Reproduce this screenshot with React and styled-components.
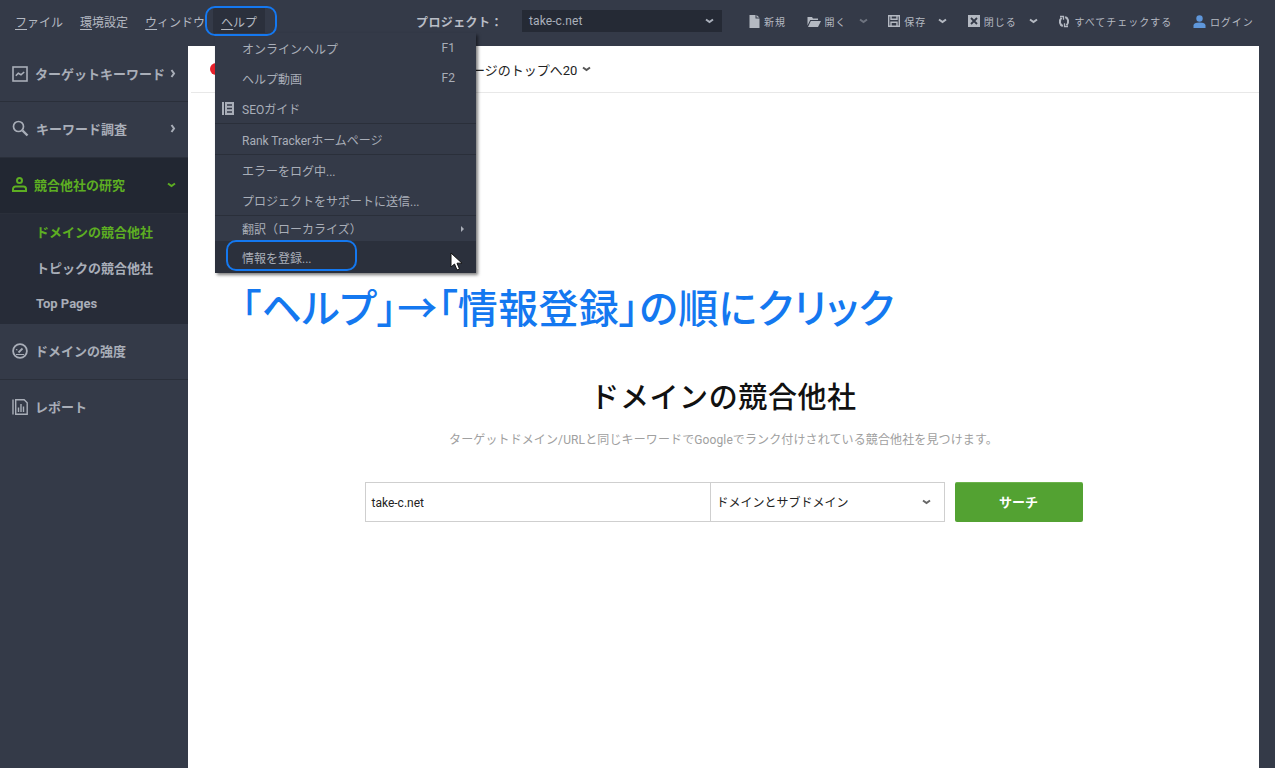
import React from 'react';
import styled, { createGlobalStyle } from 'styled-components';

const FONT = '"Roboto", "Noto Sans CJK JP", sans-serif';

const GlobalStyle = createGlobalStyle`
  html, body { margin: 0; padding: 0; height: 100%; overflow: hidden; background: #343a48; }
  * { box-sizing: border-box; }
  body { font-family: ${FONT}; }
`;

const menus = ['ファイル', '環境設定', 'ウィンドウ'];

const App = () => (
  <Page>
    <GlobalStyle />
    <TopBar>
      <MenuBar>
        {menus.map((m) => <MenuItem key={m}><u>{m[0]}</u>{m.slice(1)}</MenuItem>)}
        <HelpItem><u>ヘ</u>ルプ</HelpItem>
      </MenuBar>
      <ProjectLabel>プロジェクト：</ProjectLabel>
      <ProjectSelect>take-c.net<SmallChevron $color="#aab0bb" /></ProjectSelect>
      <Tools>
        <Tool><FileGlyph />新規</Tool>
        <Tool><FolderGlyph />開く<Caret $dim /></Tool>
        <Tool><SaveGlyph />保存<Caret /></Tool>
        <Tool><CloseGlyph />閉じる<Caret /></Tool>
        <Tool><SyncGlyph />すべてチェックする</Tool>
        <Tool><UserGlyph />ログイン</Tool>
      </Tools>
    </TopBar>

    <Body>
      <Sidebar>
        <NavRow>
          <NavLabel><ChartGlyph />ターゲットキーワード</NavLabel>
          <NavChevronRight />
        </NavRow>
        <NavRow>
          <NavLabel><SearchGlyph />キーワード調査</NavLabel>
          <NavChevronRight />
        </NavRow>
        <NavRow $active>
          <NavLabel><PersonGlyph />競合他社の研究</NavLabel>
          <CaretGlyph />
        </NavRow>
        <SubNav>
          <SubItem $active>ドメインの競合他社</SubItem>
          <SubItem>トピックの競合他社</SubItem>
          <SubItem>Top Pages</SubItem>
        </SubNav>
        <NavRow>
          <NavLabel><GaugeGlyph />ドメインの強度</NavLabel>
        </NavRow>
        <NavRow $last>
          <NavLabel><ReportGlyph />レポート</NavLabel>
        </NavRow>
      </Sidebar>

      <Main>
        <FilterBar>
          <RedDot />
          <FilterText>ページのトップへ20<SmallChevron $color="#555" /></FilterText>
        </FilterBar>
        <Hero>
          <Title>ドメインの競合他社</Title>
          <Description>ターゲットドメイン/URLと同じキーワードでGoogleでランク付けされている競合他社を見つけます。</Description>
          <SearchForm>
            <DomainInput>take-c.net</DomainInput>
            <ScopeSelect><span>ドメインとサブドメイン</span><SmallChevron $color="#666" /></ScopeSelect>
            <SearchButton>サーチ</SearchButton>
          </SearchForm>
        </Hero>
      </Main>
      <RightEdge />
    </Body>

    <HelpMenu>
      <HelpRow>オンラインヘルプ<Key>F1</Key></HelpRow>
      <HelpRow>ヘルプ動画<Key>F2</Key></HelpRow>
      <HelpRow $line><GuideGlyph />SEOガイド</HelpRow>
      <HelpRow $line>Rank Trackerホームページ</HelpRow>
      <HelpRow>エラーをログ中...</HelpRow>
      <HelpRow $line>プロジェクトをサポートに送信...</HelpRow>
      <HelpRow $short>翻訳（ローカライズ）<Arrow /></HelpRow>
      <HelpRow $hover>情報を登録...<Cursor /></HelpRow>
    </HelpMenu>

    <Ring $x={205} $y={6} $w={72} $h={30} />
    <Ring $x={226} $y={240} $w={131} $h={31} />
    <Annotation>「ヘルプ」→「情報登録」の順にクリック</Annotation>
  </Page>
);

const FileGlyph = () => (
  <svg width="11" height="13" viewBox="0 0 11 13"><path d="M0.500 0H6.500V3.500H10.500V13H0.500zM7.500 0l3 2.600h-3z" fill="#b4b9c2" /></svg>
);
const FolderGlyph = () => (
  <svg width="14" height="11" viewBox="0 0 14 11"><path d="M0.500 1H5l1 1.500h5V4H3.200L0.500 9.500zM3.800 5H14l-3 6H1z" fill="#b4b9c2" /></svg>
);
const SaveGlyph = () => (
  <svg width="12" height="12" viewBox="0 0 12 12" fill="none" stroke="#b4b9c2" strokeWidth="1.4"><path d="M0.700 0.700h10.600v10.600H0.700z" /><path d="M3 1v3.200h6V1M3 11V7.200h6V11" /></svg>
);
const CloseGlyph = () => (
  <svg width="12" height="12" viewBox="0 0 12 12"><rect width="12" height="12" fill="#b4b9c2" /><path d="M3 3l6 6M9 3l-6 6" stroke="#343a48" strokeWidth="1.8" /></svg>
);
const SyncGlyph = () => (
  <svg width="12" height="13" viewBox="0 0 12 13" fill="none" stroke="#b4b9c2" strokeWidth="2"><path d="M4.800 11C2 10 0.500 6 3.500 2.600" /><path d="M7.200 2C10 3 11.500 7 8.500 10.400" /><path d="M2 1.500h3.500v3.200M10 11.500H6.500V8.300" strokeWidth="1.300" /></svg>
);
const UserGlyph = () => (
  <svg width="13" height="13" viewBox="0 0 13 13" fill="#5f97db"><circle cx="6.500" cy="3.500" r="3.200" /><path d="M0.500 13V10.500C0.500 8.500 2.500 7.500 6.500 7.500S12.500 8.500 12.500 10.500V13z" /></svg>
);
const ChartGlyph = () => (
  <svg width="16" height="16" viewBox="0 0 16 16" fill="none" stroke="currentColor"><rect x="1" y="1" width="14" height="14" strokeWidth="1.6" /><path d="M3.800 9.800L6.300 7.300 9 8.800 12.200 6" strokeWidth="1.6" /></svg>
);
const SearchGlyph = () => (
  <svg width="17" height="17" viewBox="0 0 17 17" fill="none" stroke="currentColor"><circle cx="6.500" cy="6.500" r="5" strokeWidth="1.700" /><path d="M10.500 10.500L15.500 15.500" strokeWidth="2.400" /></svg>
);
const PersonGlyph = () => (
  <svg width="15" height="15" viewBox="0 0 15 15" fill="none" stroke="currentColor" strokeWidth="2"><circle cx="7.500" cy="3.500" r="2.500" /><path d="M1 14v-2a2.500 2.500 0 0 1 2.500-2.500h8A2.500 2.500 0 0 1 14 12v2z" /></svg>
);
const GaugeGlyph = () => (
  <svg width="16" height="16" viewBox="0 0 16 16" fill="none" stroke="currentColor" strokeWidth="1.800"><circle cx="8" cy="8" r="6.900" /><path d="M6.500 9.500L10.500 5.500" /><path d="M4 6.500l1.500 0.500M4 11.500h8" strokeWidth="1.200" /></svg>
);
const ReportGlyph = () => (
  <svg width="16" height="16" viewBox="0 0 16 16" fill="none" stroke="currentColor" strokeWidth="1.400"><path d="M1 0.500v15M3.700 0.700h8.500l3 3v11.600H3.700z" /><path d="M6.500 13V8.500M9 13V5M11.500 13V7.500" /></svg>
);
const Guide = ({ className }) => (
  <svg className={className} width="12" height="13" viewBox="0 0 12 13" fill="#a9aeb8"><rect x="0" y="0" width="2" height="13" /><path d="M3 0h9v13H3z" /><path d="M5 3h5M5 6.500h5M5 10h5" stroke="#343a48" strokeWidth="1.300" /></svg>
);
const CursorGlyph = ({ className }) => (
  <svg className={className} width="13" height="19" viewBox="0 0 13 19"><path d="M1 1v14l3.500-3 2.500 6 2.500-1-2.500-5.800H12z" fill="#fff" stroke="#111" strokeWidth="1" /></svg>
);
const CaretGlyph = ({ className }) => (
  <svg className={className} width="9" height="6" viewBox="0 0 9 6" fill="none" stroke="currentColor" strokeWidth="2"><path d="M1 1.500l3.500 2.500L8 1.500" /></svg>
);
const ChevronGlyph = ({ className }) => (
  <svg className={className} width="6" height="9" viewBox="0 0 6 9" fill="none" stroke="currentColor" strokeWidth="2"><path d="M1.500 1l2.500 3.500L1.500 8" /></svg>
);

const Page = styled.div`
  position: relative;
  width: 1275px;
  height: 768px;
  overflow: hidden;
  background: #343a48;
  font-family: ${FONT};
`;

const TopBar = styled.header`
  height: 46px;
  display: flex;
  align-items: center;
  padding: 0 0 4px 15px;
  color: #b4b9c2;
`;

const MenuBar = styled.nav`
  display: flex;
  align-items: center;
  width: 401px;
  gap: 17px;
`;

const MenuItem = styled.span`
  font-size: 12px;
  color: #b4b9c2;

  u {
    text-underline-offset: 2px;
  }
`;

const HelpItem = styled(MenuItem)`
  background: #2b303c;
  margin: 0 0 0 -9px;
  padding: 6px 8px;
`;

const ProjectLabel = styled.span`
  font-size: 12px;
  font-weight: 700;
  letter-spacing: 0.4px;
  width: 106px;
  color: #b9bdc6;
`;

const SmallChevron = styled(CaretGlyph)`
  color: ${({ $color }) => $color};
  flex: none;
`;

const ProjectSelect = styled.div`
  width: 200px;
  height: 22px;
  display: flex;
  align-items: center;
  justify-content: space-between;
  padding: 0 8px 0 7px;
  background: #252a35;
  font-size: 12px;
  letter-spacing: 0.1px;
  color: #aab0bb;
`;

const Tools = styled.div`
  display: flex;
  align-items: center;
  gap: 20.6px;
  margin-left: 27px;
`;

const Tool = styled.span`
  display: flex;
  align-items: center;
  gap: 4px;
  font-size: 10px;
  letter-spacing: 1px;
  color: #b4b9c2;
  white-space: nowrap;
`;

const Caret = styled(CaretGlyph)`
  margin-left: 8px;
  opacity: ${({ $dim }) => ($dim ? 0.45 : 1)};
`;

const Body = styled.div`
  display: flex;
  height: 722px;
`;

const Sidebar = styled.aside`
  width: 188px;
  flex: none;
`;

const NavRow = styled.div`
  height: 56px;
  display: flex;
  align-items: center;
  justify-content: space-between;
  padding: 0 12px 2px 12px;
  border-bottom: 1px solid ${({ $last }) => ($last ? 'transparent' : '#2a2f3a')};
  background: ${({ $active }) => ($active ? '#222732' : 'transparent')};
  color: ${({ $active }) => ($active ? '#5dae22' : '#a9aeb8')};

  &:first-child {
    padding-bottom: 0;
  }
`;

const NavLabel = styled.span`
  display: flex;
  align-items: center;
  gap: 7px;
  font-size: 13px;
  font-weight: 700;
  white-space: nowrap;
`;

const NavChevronRight = styled(ChevronGlyph)`
  flex: none;
  margin-left: -4px;
`;

const SubNav = styled.div`
  background: #272c38;
  height: 110px;
  display: flex;
  flex-direction: column;
  padding-left: 36px;
`;

const SubItem = styled.div`
  height: 36px;
  padding-bottom: 2px;
  display: flex;
  align-items: center;
  font-size: 13px;
  font-weight: 700;
  color: ${({ $active }) => ($active ? '#5dae22' : '#a9aeb8')};
`;

const Main = styled.main`
  width: 1071px;
  flex: none;
  background: #fff;
  display: flex;
  flex-direction: column;
`;

const FilterBar = styled.div`
  height: 47px;
  margin-left: 3px;
  display: flex;
  align-items: center;
  padding-left: 19px;
  border-bottom: 1px solid #e8e8e8;
`;

const RedDot = styled.span`
  width: 12px;
  height: 12px;
  border-radius: 50%;
  background: #e8202a;
`;

const FilterText = styled.span`
  margin-left: 237px;
  display: flex;
  align-items: center;
  gap: 5px;
  font-size: 13px;
  color: #222;
  white-space: nowrap;
`;

const Hero = styled.section`
  padding-top: 287px;
  display: flex;
  flex-direction: column;
  align-items: center;
`;

const Title = styled.h1`
  margin: 0;
  font-size: 29px;
  line-height: 36px;
  font-weight: 500;
  letter-spacing: 0.6px;
  color: #111;
`;

const Description = styled.p`
  margin: 15px 0 0;
  font-size: 12px;
  line-height: 18px;
  letter-spacing: 0.12px;
  color: #a0a0a0;
`;

const SearchForm = styled.div`
  margin-top: 33px;
  display: flex;
  align-items: stretch;
  height: 40px;
`;

const DomainInput = styled.div`
  width: 346px;
  border: 1px solid #cfcfcf;
  display: flex;
  align-items: center;
  padding: 1px 0 0 6px;
  font-size: 12px;
  color: #222;
`;

const ScopeSelect = styled.div`
  width: 234px;
  border: 1px solid #cfcfcf;
  border-left: 0;
  display: flex;
  align-items: center;
  justify-content: space-between;
  padding: 0 13px 0 6px;
  font-size: 12px;
  color: #222;

  span {
    margin-top: -1px;
  }
`;

const SearchButton = styled.button`
  width: 128px;
  margin-left: 10px;
  padding: 0 0 2px;
  border: 0;
  border-top: 1px solid #6cb34c;
  border-radius: 2px;
  background: #53a232;
  color: #fff;
  font-family: ${FONT};
  font-size: 13px;
  font-weight: 700;
`;

const RightEdge = styled.div`
  flex: 1;
`;

const HelpMenu = styled.div`
  position: absolute;
  left: 215px;
  top: 33px;
  width: 261px;
  height: 240px;
  background: #343a48;
  box-shadow: 2px 2px 3px rgba(0, 0, 0, 0.5);
  color: #a9aeb8;
  display: flex;
  flex-direction: column;
`;

const HelpRow = styled.div`
  position: relative;
  height: ${({ $short, $line }) => ($short ? '25px' : $line ? '31px' : '30px')};
  flex: ${({ $hover }) => ($hover ? '1' : 'none')};
  display: flex;
  align-items: center;
  padding: 0 21px 0 27px;
  font-size: 12px;
  white-space: nowrap;
  border-bottom: ${({ $line }) => ($line ? '1px solid #2a2f3a' : '0')};
  background: ${({ $hover }) => ($hover ? '#2b303c' : 'transparent')};
`;

const Key = styled.span`
  margin-left: auto;
`;

const GuideGlyph = styled(Guide)`
  position: absolute;
  left: 7px;
  top: 9px;
`;

const Arrow = styled.span`
  position: absolute;
  right: 12px;
  width: 0;
  height: 0;
  border-left: 3px solid #a9aeb8;
  border-top: 3px solid transparent;
  border-bottom: 3px solid transparent;
`;

const Cursor = styled(CursorGlyph)`
  position: absolute;
  left: 235px;
  top: 11px;
`;

const Ring = styled.div`
  position: absolute;
  left: ${({ $x }) => $x}px;
  top: ${({ $y }) => $y}px;
  width: ${({ $w }) => $w}px;
  height: ${({ $h }) => $h}px;
  border: 2.5px solid #1478f0;
  border-radius: 10px;
`;

const Annotation = styled.div`
  position: absolute;
  left: 241px;
  top: 286px;
  font-size: 40px;
  line-height: 48px;
  font-weight: 500;
  letter-spacing: 0.3px;
  font-feature-settings: "palt";
  color: #1478f0;
  white-space: nowrap;
`;

export default App;
